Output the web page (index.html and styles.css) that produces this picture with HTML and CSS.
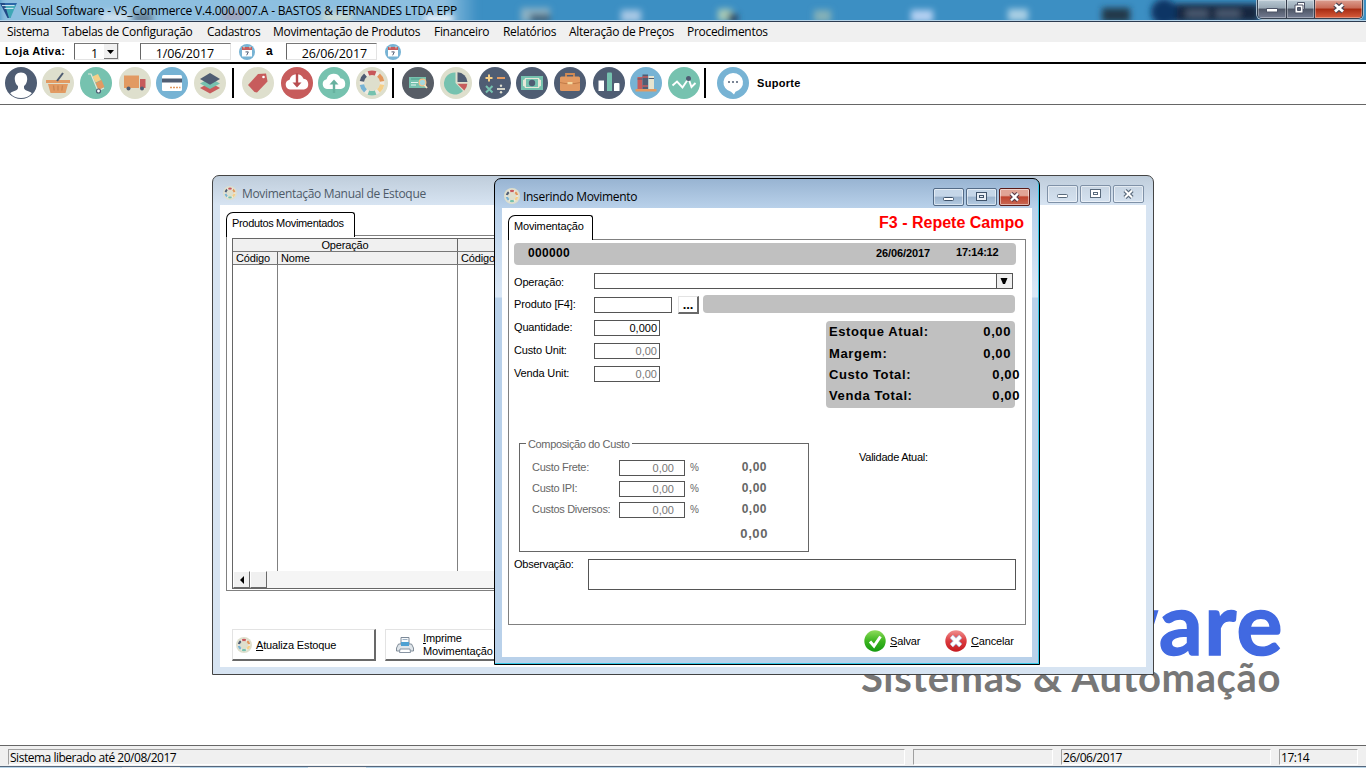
FILE: index.html
```html
<!DOCTYPE html>
<html lang="pt-BR">
<head>
<meta charset="utf-8">
<title>Visual Software - VS_Commerce</title>
<link rel="stylesheet" href="styles.css">
</head>
<body>
<svg class="defs" aria-hidden="true">
  <defs>
    <linearGradient id="okFill" x1="0" y1="0" x2="0" y2="1"><stop offset="0" stop-color="#8fdc5c"/><stop offset=".5" stop-color="#3cb51f"/><stop offset="1" stop-color="#159a10"/></linearGradient>
    <linearGradient id="noFill" x1="0" y1="0" x2="0" y2="1"><stop offset="0" stop-color="#f09090"/><stop offset=".5" stop-color="#db3a3e"/><stop offset="1" stop-color="#c41a20"/></linearGradient>
    <symbol id="ring" viewBox="0 0 32 32">
      <circle cx="16" cy="16" r="16" fill="#dedfcd"/>
      <g fill="none" stroke-width="4.4">
        <circle cx="16" cy="16" r="10.2" stroke="#eeeae0" stroke-width="4.4"/>
        <path d="M12.4 6.4A10.2 10.2 0 0 1 19.6 6.4" stroke="#c7575a"/>
        <path d="M22.500 8.100A10.200 10.200 0 0 1 26.100 14.300" stroke="#e2975d"/>
        <path d="M26.100 17.700A10.200 10.200 0 0 1 22.500 23.900" stroke="#f5cf87"/>
        <path d="M19.600 25.600A10.200 10.200 0 0 1 12.400 25.600" stroke="#76c2af"/>
        <path d="M9.500 23.900A10.200 10.200 0 0 1 5.900 17.700" stroke="#77b3d4"/>
        <path d="M5.900 14.300A10.200 10.200 0 0 1 9.500 8.100" stroke="#4f5d73"/>
      </g>
    </symbol>
    <symbol id="calendar" viewBox="0 0 16 16">
      <circle cx="8" cy="8" r="8" fill="#77b3d4"/>
      <path d="M3 5h10v7.5H3z" fill="#fff"/><path d="M3 3h10v3H3z" fill="#c75c5c"/>
      <path d="M5 2v2.400M11 2v2.400" stroke="#e0e0d1" stroke-width="1"/>
      <path d="M6.500 7.900h2.800L7.700 11.300" fill="none" stroke="#4f5d73" stroke-width="1"/>
    </symbol>
  </defs>
</svg>

<header class="titlebar">
  <svg class="glass" width="1366" height="20" viewBox="0 0 1366 20">
    <filter id="soft" x="-5%" y="-50%" width="110%" height="200%"><feGaussianBlur stdDeviation="3"/></filter>
    <linearGradient id="halo"><stop offset="0" stop-color="#a9cfe9"/><stop offset=".93" stop-color="#a9cfe9"/><stop offset="1" stop-color="#a9cfe9" stop-opacity="0"/></linearGradient>
    <g filter="url(#soft)">
      <path d="M0 -6h478v32H0z" fill="url(#halo)" opacity=".75"/>
      <path d="M100 12h30v12h-30z" fill="#e7eef4" opacity=".7"/>
      <path d="M133 12h20v12h-20z" fill="#4c5362" opacity=".55"/>
      <path d="M222 10h22v12h-22z" fill="#b87888" opacity=".4"/>
      <path d="M322 12h30v12h-30z" fill="#f0efcf" opacity=".6"/><path d="M425 15h28v8h-28z" fill="#edf4fb"/>
      <path d="M521 8h29v14h-29z" fill="#8db2c5"/><path d="M530 14h20v8h-20z" fill="#47657b"/>
      <path d="M621 10h20v12h-20z" fill="#a7c8e5"/>
      <path d="M718 9h14v12h-14z" fill="#a9cbb7"/><path d="M728 14h10v8h-10z" fill="#29435e"/>
      <path d="M814 10h17v12h-17z" fill="#84b1b8"/>
      <path d="M911 10h22v12h-22z" fill="#b4d0f2"/><path d="M1008 9h20v12h-20z" fill="#a9cfe4"/>
      <path d="M1102 8h28v14h-28z" fill="#22374a"/>
      <path d="M1163 4h96v18h-96z" fill="#14253f"/><circle cx="1164" cy="12" r="13" fill="#0b3565"/>
      <path d="M1186 11h22v5h-22zM1216 11h24v5h-24z" fill="#56677f"/>
    </g>
  </svg>
  <svg class="applogo" width="17" height="17" viewBox="0 0 17 17"><path d="M0 1h17l-2 4H2z" fill="#2d66a8"/><path d="M0 1h4.500l6 15H7.500z" fill="#214a86"/><path d="M5 3h11L10.500 16H9z" fill="#3fa7b5"/><path d="M2 3.600h12.500M4.500 6.400h9" stroke="#d5ebf7" stroke-width="1"/></svg>
  <span class="apptitle">Visual Software - VS_Commerce V.4.000.007.A - BASTOS &amp; FERNANDES LTDA EPP</span>
  <div class="sysbtns">
    <span class="sys"><svg width="28" height="18"><path d="M8.500 8.500h11v3.500h-11z" fill="#fff" stroke="#4c5367"/></svg></span>
    <span class="sys"><svg width="27" height="18"><path d="M10.500 2.500h7v7h-7z" fill="#fff" stroke="#4c5367"/><path d="M8 5h8v8H8z" fill="#fff" stroke="#4c5367"/><path d="M10.500 7.500h3v3h-3z" fill="#596172" stroke="#4c5367"/></svg></span>
    <span class="sys close"><svg width="47" height="18"><path d="M20 4.500l8 7M28 4.500l-8 7" stroke="#4c4552" stroke-width="5"/><path d="M20 4.500l8 7M28 4.500l-8 7" stroke="#fff" stroke-width="2.800"/></svg></span>
  </div>
</header>

<nav class="menu">
  <span>Sistema</span><span>Tabelas de Configuração</span><span>Cadastros</span><span>Movimentação de Produtos</span><span>Financeiro</span><span>Relatórios</span><span>Alteração de Preços</span><span>Procedimentos</span>
</nav>

<section class="filters">
  <b class="store">Loja Ativa:</b>
  <span class="sunken shop">1<i class="drop"><svg width="13" height="14"><path d="M3 6h7l-3.500 4z"/></svg></i></span>
  <span class="sunken date first">1/06/2017</span>
  <svg class="cal" width="16" height="16"><use href="#calendar"/></svg>
  <b class="until">a</b>
  <span class="sunken date">26/06/2017</span>
  <svg class="cal" width="16" height="16"><use href="#calendar"/></svg>
</section>

<section class="toolbar">
  <svg viewBox="0 0 32 32"><circle cx="16" cy="16" r="16" fill="#4f5d73"/><path d="M16 5.500c4.500 0 6.500 3 6.200 7-.3 3.200-1.500 5.200-3.200 6.500v2c0 1.500 2 2.500 5 3.500 1.500.5 2.200 1 2.800 1.700C24 29.500 20 31 16 31S8 29.500 5.200 26.200C6 25.500 6.500 25 8 24.500c3-1 5-2 5-3.500v-2c-1.700-1.300-2.900-3.300-3.200-6.500-.3-4 1.700-7 6.200-7z" fill="#fff"/></svg>
  <svg viewBox="0 0 32 32"><circle cx="16" cy="16" r="16" fill="#dedfcd"/><path d="M4 13h24v3H4zM6 17h20l-2.500 9h-15z" fill="#e29a62"/><path d="M11.500 18.500l.7 5M16 18.500v5M20.500 18.500l-.7 5" stroke="#c98450" stroke-width="1.300"/><path d="M21 6l-6 8" stroke="#4f5d73" stroke-width="2"/></svg>
  <svg viewBox="0 0 32 32"><circle cx="16" cy="16" r="16" fill="#76c2af"/><path d="M12.500 9.500l5.500-2.500 3 6-5.500 2.500z" fill="#f5cf87"/><path d="M15.500 16l6-3 3 7-6 3z" fill="#e29a62"/><path d="M8 7h3l7 17 6-3" fill="none" stroke="#e6e7d8" stroke-width="1.200"/><circle cx="18.500" cy="24" r="2" fill="#fff" stroke="#4f5d73" stroke-width="1.200"/></svg>
  <svg viewBox="0 0 32 32"><circle cx="16" cy="16" r="16" fill="#dedfcd"/><path d="M5 8.500h15v12.500H5z" fill="#e29a62"/><path d="M21 12h5.500v9H21z" fill="#c75c5c"/><circle cx="9.500" cy="21.500" r="2" fill="#4f5d73"/><circle cx="23" cy="21.500" r="2" fill="#4f5d73"/></svg>
  <svg viewBox="0 0 32 32"><circle cx="16" cy="16" r="16" fill="#77b3d4"/><rect x="6" y="8" width="20" height="16" rx="1.500" fill="#fff"/><path d="M6 11.500h20v4H6z" fill="#4f5d73"/><path d="M14 20.500h2M17 20.500h2M20 20.500h2M23 20.500h1.500" stroke="#e29a62" stroke-width="1.500"/></svg>
  <svg viewBox="0 0 32 32"><circle cx="16" cy="16" r="16" fill="#dedfcd"/><path d="M6 21l10 5.500L26 21l-10-5.500z" fill="#c75c5c"/><path d="M6 16.500L16 22l10-5.500L16 11z" fill="#76c2af"/><path d="M6 12l10 5.800L26 12 16 6z" fill="#4f5d73"/></svg>
  <i class="sep"></i>
  <svg viewBox="0 0 32 32"><circle cx="16" cy="16" r="16" fill="#dedfcd"/><path d="M6 18L16 7l8-.5 1.500 8L15 25.500 12.500 25z" fill="#c75c5c"/><circle cx="21.500" cy="10" r="1.300" fill="#fff"/></svg>
  <svg viewBox="0 0 32 32"><circle cx="16" cy="16" r="16" fill="#c75c5c"/><path d="M9 22.500a5 5 0 0 1-.5-9.800 7.500 7.500 0 0 1 14-1A5.500 5.500 0 0 1 23 22.500z" fill="#fff"/><path d="M16 6v11" stroke="#b84d50" stroke-width="2.400"/><path d="M11.500 15.500h9L16 20.500z" fill="#b84d50"/></svg>
  <svg viewBox="0 0 32 32"><circle cx="16" cy="16" r="16" fill="#76c2af"/><path d="M9 22a5 5 0 0 1-.5-9.800 7.500 7.500 0 0 1 14-1A5.500 5.500 0 0 1 23 22z" fill="#fff"/><path d="M16 16v10" stroke="#67b19f" stroke-width="2.400"/><path d="M11.500 17.500h9L16 12.500z" fill="#67b19f"/></svg>
  <svg><use href="#ring"/></svg>
  <i class="sep"></i>
  <svg viewBox="0 0 32 32"><circle cx="16" cy="16" r="16" fill="#575d66"/><path d="M7 10h17v11H7z" fill="#76c2af"/><path d="M9 12h12" stroke="#4f9a8a" stroke-width="1"/><path d="M9 15.500h7M9 18h5" stroke="#e5f4ef" stroke-width="1"/><circle cx="20.500" cy="15.500" r="3.300" fill="#a6d8dd" stroke="#f3c08b" stroke-width="1.300"/><path d="M22.500 18l2.500 3" stroke="#f3e3c5" stroke-width="1.800"/></svg>
  <svg viewBox="0 0 32 32"><circle cx="16" cy="16" r="16" fill="#dedfcd"/><path d="M15.500 5.500V16l7.500 8A11 11 0 1 1 15.500 5.500z" fill="#76c2af"/><path d="M17.500 5.200A10.500 10.500 0 0 1 27.500 15h-10z" fill="#4f5d73"/><path d="M17.500 16.800h9.800a10 10 0 0 1-3 6.700z" fill="#c75c5c"/></svg>
  <svg viewBox="0 0 32 32"><circle cx="16" cy="16" r="16" fill="#4f5d73"/><path d="M6.500 11h7M10 7.500v7" stroke="#f5cf87" stroke-width="2"/><path d="M18 11h8" stroke="#e29a62" stroke-width="2"/><path d="M7 19l6.500 6.500M13.500 19L7 25.500" stroke="#76c2af" stroke-width="2"/><path d="M18 22h8" stroke="#e0e0d1" stroke-width="1.800"/><circle cx="22" cy="18.800" r="1.200" fill="#e0e0d1"/><circle cx="22" cy="25.200" r="1.200" fill="#e0e0d1"/></svg>
  <svg viewBox="0 0 32 32"><circle cx="16" cy="16" r="16" fill="#4f5d73"/><path d="M5 9h22v14H5z" fill="#76c2af"/><path d="M9 11h14q0 2 2 2v6q-2 0-2 2H9q0-2-2-2v-6q2 0 2-2z" fill="#e6e7d8"/><path d="M10 12h12v8H10z" fill="#76c2af"/><circle cx="16" cy="16" r="3.200" fill="#4f5d73"/></svg>
  <svg viewBox="0 0 32 32"><circle cx="16" cy="16" r="16" fill="#4f5d73"/><path d="M12 10V7h8v3" fill="none" stroke="#d18a53" stroke-width="1.800"/><rect x="6" y="9.500" width="20" height="14.500" rx="1.500" fill="#e29a62"/><path d="M6 15.500q10 2.500 20 0" fill="none" stroke="#c47d4a" stroke-width="1.200"/><path d="M13.500 15h5v2.300h-5z" fill="#f5d9a0"/></svg>
  <svg viewBox="0 0 32 32"><circle cx="16" cy="16" r="16" fill="#4f5d73"/><path d="M5.500 13.500h5.500V24H5.500z" fill="#fff"/><path d="M14 6.500q0-1 1-1h3q1 0 1 1V24h-5z" fill="#76c2af"/><path d="M21 17q0-1 1-1h3.500q1 0 1 1v7H21z" fill="#fff"/></svg>
  <svg viewBox="0 0 32 32"><circle cx="16" cy="16" r="16" fill="#77b3d4"/><path d="M7.500 10h5v12.500h-5z" fill="#c75c5c"/><path d="M12.500 7.500H18v15h-5.500z" fill="#4f5d73"/><path d="M12.500 10H18M12.500 19H18" stroke="#c75c5c" stroke-width="1.500"/><path d="M18.500 9h5.500v13.500h-5.500z" fill="#e6e4cf"/><path d="M7.500 12h5M18.500 11.500H24" stroke="#4f5d73" stroke-width="1"/><path d="M5.500 22h21v2.500h-21z" fill="#e29a62"/></svg>
  <svg viewBox="0 0 32 32"><circle cx="16" cy="16" r="16" fill="#76c2af"/><path d="M4.500 18.500l4.500-4 5.500 6 6-9 3 8.500 4-4" fill="none" stroke="#fff" stroke-width="1.900"/><circle cx="20.500" cy="11.500" r="2.500" fill="#4f5d73"/></svg>
  <i class="sep"></i>
  <svg viewBox="0 0 32 32"><circle cx="16" cy="16" r="16" fill="#77b3d4"/><path d="M16 6a10 9.500 0 0 1 2.500 18.700L17 27.500l-3-2.800A10 9.500 0 0 1 16 6z" fill="#fff"/><path d="M11 15h2M15 15h2M19 15h2" stroke="#4f5d73" stroke-width="1.600"/></svg>
  <b class="support">Suporte</b>
</section>

<main class="desktop">
  <div class="brand"><div class="brand-name">Software</div><div class="brand-sub">Sistemas &amp; Automação</div></div>

  <section class="win back">
    <header class="wintitle"><svg width="14" height="14"><use href="#ring"/></svg><span>Movimentação Manual de Estoque</span>
      <div class="winbtns"><i><svg width="29" height="16"><rect x="9.500" y="8.500" width="10" height="3" rx="1" fill="#fff" stroke="#596a7c"/></svg></i><i><svg width="29" height="16"><rect x="9.500" y="3.500" width="10" height="8" fill="#fff" stroke="#596a7c"/><rect x="12.500" y="6.500" width="4" height="2" fill="none" stroke="#596a7c"/></svg></i><i><svg width="29" height="16"><path d="M11 4.500l7 7M18 4.500l-7 7" stroke="#596a7c" stroke-width="4.500"/><path d="M11 4.500l7 7M18 4.500l-7 7" stroke="#fff" stroke-width="2"/></svg></i></div>
    </header>
    <div class="winbody">
      <div class="tab tab-back">Produtos Movimentados</div>
      <div class="listpanel">
        <div class="grid">
          <div class="gh top"><span>Operação</span><span></span></div>
          <div class="gh cols"><span>Código</span><span>Nome</span><span>Código</span></div>
          <div class="rows"><span></span><span></span><span></span></div>
          <div class="scroll"><i><svg width="17" height="16"><path d="M10 4v8L6 8z"/></svg></i><i></i></div>
        </div>
      </div>
      <div class="actions">
        <div class="btn"><svg width="16" height="16"><use href="#ring"/></svg><span><u>A</u>tualiza Estoque</span></div>
        <div class="btn print"><svg width="18" height="18" viewBox="0 0 18 18"><path d="M5 1.500h8V8H5z" fill="#f7fafc" stroke="#7c8998"/><path d="M6.500 3.500h5" stroke="#9cb1c4"/><path d="M2.500 8h13l2 4v3H.5v-3z" fill="#dfe5ea" stroke="#75818f" stroke-width=".9"/><path d="M5 6h8v4H5z" fill="#4da0d2"/><path d="M4 13h10l.5 3.500h-11z" fill="#fff" stroke="#7c8998" stroke-width=".9"/></svg><span><u>I</u>mprime<br>Movimentação</span></div>
      </div>
    </div>
  </section>

  <section class="win front">
    <header class="wintitle"><svg width="16" height="16"><use href="#ring"/></svg><span>Inserindo Movimento</span>
      <div class="winbtns"><i><svg width="29" height="16"><rect x="9.500" y="8.500" width="10" height="3" rx="1" fill="#fff" stroke="#3f536b"/></svg></i><i><svg width="29" height="16"><rect x="9.500" y="3.500" width="10" height="8" fill="#e8eef5" stroke="#3f536b"/><rect x="12.500" y="6.500" width="4" height="2" fill="none" stroke="#3f536b"/></svg></i><i class="red"><svg width="29" height="16"><path d="M11 4.500l7 7M18 4.500l-7 7" stroke="#5a3b47" stroke-width="4.500"/><path d="M11 4.500l7 7M18 4.500l-7 7" stroke="#fff" stroke-width="2.300"/></svg></i></div>
    </header>
    <div class="winbody">
      <div class="dlghead"><div class="tab tab-front">Movimentação</div><div class="hint">F3 - Repete Campo</div></div>
      <div class="panel">
        <div class="infobar"><b class="code">000000</b><b class="day">26/06/2017</b><b class="hour">17:14:12</b></div>
        <div class="row op"><label>Operação:</label><span class="box combo"><i><svg width="14" height="14"><path d="M3.500 4h7L8 10H6z"/></svg></i></span></div>
        <div class="row prod"><label>Produto [F4]:</label><span class="box p"></span><span class="dots">...</span><span class="fill"></span></div>
        <div class="middle">
          <div class="fields">
            <div class="row"><label>Quantidade:</label><span class="box n on">0,000</span></div>
            <div class="row"><label>Custo Unit:</label><span class="box n">0,00</span></div>
            <div class="row"><label>Venda Unit:</label><span class="box n">0,00</span></div>
          </div>
          <div class="totals">
            <div><span>Estoque Atual:</span><span>0,00</span></div>
            <div><span>Margem:</span><span>0,00</span></div>
            <div class="over"><span>Custo Total:</span><span>0,00</span></div>
            <div class="over"><span>Venda Total:</span><span>0,00</span></div>
          </div>
        </div>
        <div class="lower">
          <div class="group">
            <div class="legend"><span>Composição do Custo</span></div>
            <div class="crow"><label>Custo Frete:</label><span class="box c">0,00</span><em>%</em><b>0,00</b></div>
            <div class="crow"><label>Custo IPI:</label><span class="box c">0,00</span><em>%</em><b>0,00</b></div>
            <div class="crow"><label>Custos Diversos:</label><span class="box c">0,00</span><em>%</em><b>0,00</b></div>
            <div class="csum">0,00</div>
          </div>
          <div class="valid">Validade Atual:</div>
        </div>
        <div class="obs"><label>Observação:</label><span class="box memo"></span></div>
      </div>
      <footer class="dlgfoot">
        <svg width="22" height="22"><circle cx="11" cy="11" r="10.700" fill="url(#okFill)"/><path d="M6 11.500l4 4.500 6.500-9.500" fill="none" stroke="#fff" stroke-width="3"/></svg><span class="save"><u>S</u>alvar</span>
        <svg width="22" height="22"><circle cx="11" cy="11" r="10.700" fill="url(#noFill)"/><path d="M6.500 6.500l9 9M15.500 6.500l-9 9" stroke="#a8b4d8" stroke-width="4.600"/><path d="M6.500 6.500l9 9M15.500 6.500l-9 9" stroke="#fff" stroke-width="3.200"/></svg><span class="cancel"><u>C</u>ancelar</span>
      </footer>
    </div>
  </section>
</main>

<footer class="status"><span>Sistema liberado até 20/08/2017</span><span></span><span>26/06/2017</span><span>17:14</span></footer>
<div class="taskbar"></div>
</body>
</html>
```
FILE: styles.css
```css
* { box-sizing: border-box; }
body { margin: 0; width: 1366px; height: 768px; overflow: hidden; background: #fff; color: #000; font-family: "Liberation Sans", sans-serif; font-size: 11px; letter-spacing: -0.15px; white-space: nowrap; display: flex; flex-direction: column; }
i, em { font-style: normal; }
svg { display: block; flex: none; }
.defs { position: absolute; width: 0; height: 0; }

/* application title bar */
.titlebar { position: relative; height: 22px; flex: none; display: flex; background: #3c8fc3; border-bottom: 1px solid #2c3b50; box-shadow: inset 0 -1px #b5d3e8; overflow: hidden; font-family: "Open Sans", sans-serif; }
.glass { position: absolute; left: 0; top: 0; }
.applogo { position: relative; margin: 2px 0 0 0; }
.apptitle { position: relative; margin-left: 4px; font-size: 12px; line-height: 21px; letter-spacing: -0.17px; }
.sysbtns { position: relative; margin-left: auto; margin-right: 3px; display: flex; height: 19px; border: 1px solid #344050; border-top: 0; border-radius: 0 0 5px 5px; box-shadow: 0 0 0 1px #a9bdcd; overflow: hidden; }
.sys { display: block; background: linear-gradient(#b9c9d4, #98a7b4 45%, #4d5565 50%, #747c92); border-right: 1px solid #343c4b; box-shadow: inset 0 0 0 1px #ffffff55; }
.sys.close { background: linear-gradient(#dc9f91, #c86a56 45%, #a72b12 50%, #d85d3c); border-right: 0; }

.menu { height: 20px; flex: none; background: #f0f0f0; padding-left: 7px; display: grid; grid-template-columns: 55px 145px 66px 161px 69px 66px 118px 90px; font: 12px/20px "Open Sans", sans-serif; letter-spacing: -0.3px; }

/* store and period filters */
.filters { height: 22px; flex: none; border-bottom: 2px solid #000; display: flex; }
.store { width: 69px; padding-left: 5px; line-height: 18px; letter-spacing: 0.4px; }
.sunken { height: 17px; margin-top: 1px; border: 1px solid #e3e3e3; border-left: 1px solid #666; border-top: 1px solid #777; font: 12.5px/19px "Open Sans", sans-serif; letter-spacing: -0.1px; text-align: right; }
.shop { width: 45px; margin-left: 5px; display: flex; justify-content: flex-end; }
.drop { width: 14px; height: 15px; margin-left: 6px; background: #f0f0f0; border: 1px solid #777; border-width: 0 1px 1px 0; }
.date { width: 91px; padding-right: 9px; }
.date.first { margin-left: 21px; padding-right: 16px; }
.cal { margin: 2px 0 0 8px; }
.until { width: 31px; padding-left: 11px; line-height: 18px; font-size: 12px; }

.toolbar { height: 41px; flex: none; border-bottom: 1px solid #666; padding: 3px 0 0 5px; display: grid; grid-template-columns: 37px 38px 39px 37px 38px 38px 10px 39px 37px 38px 36px 10px 38px 39px 37px 38px 39px 37px 38px 36px 13px 40px 60px; }
.toolbar svg { width: 32px; height: 32px; }
.sep { width: 2px; height: 30px; margin-top: 1px; background: #000; }
.support { line-height: 32px; letter-spacing: 0.3px; }

.desktop { position: relative; height: 640px; flex: none; }
.brand { position: absolute; right: 82px; top: 474px; text-align: right; font-family: Lato, sans-serif; font-weight: bold; }
.brand-name { font-size: 86px; line-height: 86px; letter-spacing: 1.5px; color: #4169e1; -webkit-text-stroke: 1.5px #4169e1; }
.brand-sub { font-size: 40px; line-height: 44px; letter-spacing: 0.6px; margin: -10px 3px 0 0; color: #777; }

/* child windows */
.win { position: absolute; border: 1px solid #444; border-radius: 7px 7px 0 0; display: flex; flex-direction: column; }
.wintitle { display: flex; font: 12px/18px "Open Sans", sans-serif; }
.winbody { flex: 1; background: #fff; }
.winbtns { display: flex; margin-left: auto; }
.winbtns i { height: 18px; border: 1px solid #7f91a7; border-radius: 2px; box-shadow: inset 0 0 0 1px #ffffff80; }
.back { left: 212px; top: 70px; width: 942px; height: 500px; padding: 0 7px 7px; background: linear-gradient(#bfcddb, #d7e4f2 29px); }
.back .wintitle { height: 29px; padding: 9px 2px 0 3px; color: #4e5a68; }
.back .wintitle span { margin-left: 5px; letter-spacing: -0.32px; }
.back .winbtns { gap: 2px; }
.back svg[height="14"] { margin-top: 1px; }
.front { left: 494px; top: 73px; width: 546px; height: 487px; padding: 0 7px 7px; border-color: #000; background: linear-gradient(#98b4d2, #b9d1ea 29px, #dbe8f6 118px, #b9d1ea 119px); box-shadow: inset -1px -1px #35c9e8; }
.front .wintitle { height: 29px; padding: 9px 2px 0 2px; }
.front .wintitle span { margin-left: 3px; letter-spacing: -0.3px; }
.front .winbtns { gap: 2px; }
.front .winbtns i { background: linear-gradient(#c5d6e8 45%, #9bb3cd 50%, #b4cbe2); border-color: #536b87; }
.front .winbtns .red { background: linear-gradient(#e1a596 40%, #c0452f 50%, #c96954); border-color: #5b1b18; }

.tab { position: relative; border: 1px solid #000; border-bottom: 0; border-radius: 7px 3px 0 0; background: #fff; }
.tab-back { width: 129px; height: 25px; margin: 7px 0 0 6px; padding-left: 5px; line-height: 20px; letter-spacing: -0.33px; z-index: 1; }
.listpanel { width: 790px; height: 356px; margin: -1px 0 0 6px; border: 1px solid #808080; border-top-color: #808080; padding: 2px 0 0 5px; margin-top: -2px; }
.grid { height: 351px; border: 1px solid #666; display: flex; flex-direction: column; }
.gh { display: grid; background: #f0f0f0; height: 13px; line-height: 13px; border-bottom: 1px solid #777; overflow: hidden; }
.gh span { border-right: 1px solid #666; padding-left: 3px; }
.top { grid-template-columns: 225px 1fr; text-align: center; }
.top span { padding-left: 0; }
.cols { grid-template-columns: 45px 180px 1fr; }
.rows { flex: 1; display: grid; grid-template-columns: 45px 180px 1fr; }
.rows span { border-right: 1px solid #808080; }
.scroll { display: flex; height: 17px; background: #f5f5f5; }
.scroll i { width: 17px; height: 17px; background: #f0f0f0; border: 1px solid #696969; border-left-color: #fff; border-top-color: #fff; }
.actions { display: flex; gap: 9px; margin: 38px 0 0 12px; }
.btn { width: 144px; height: 32px; border: 1px solid #e3e3e3; border-right: 2px solid #696969; border-bottom: 2px solid #696969; display: flex; align-items: center; padding-left: 3px; gap: 4px; }
.print { padding-left: 10px; gap: 9px; line-height: 13px; }

/* movement entry dialog */
.dlghead { display: flex; justify-content: space-between; height: 31px; padding: 7px 8px 0 6px; }
.tab-front { width: 85px; height: 25px; padding-left: 5px; line-height: 21px; z-index: 1; }
.hint { color: #f00; font-weight: bold; font-size: 16px; line-height: 16px; letter-spacing: 0; }
.panel { margin: 0 6px; height: 386px; border: 1px solid #808080; padding: 3px 9px 0 5px; }
.infobar { height: 22px; border-radius: 4px; background: #c0c0c0; display: flex; line-height: 20px; }
.code { width: 362px; padding-left: 14px; font-size: 12px; line-height: 21px; letter-spacing: 0.35px; }
.day { width: 80px; letter-spacing: -0.1px; }
.hour { line-height: 18px; letter-spacing: -0.2px; }
.row { display: flex; height: 16px; align-items: center; }
label { width: 80px; flex: none; line-height: 16px; }
.row label { margin-top: -2px; }
.row.op label { margin-top: 1px; }
.box { display: block; height: 16px; border: 1px solid #555; background: #fff; line-height: 15px; text-align: right; color: #777; }
.op { margin-top: 8px; }
.combo { width: 419px; display: flex; justify-content: flex-end; }
.combo i { width: 16px; border-left: 1px solid #555; background: #f0f0f0; }
.prod { height: 20px; margin-top: 6px; }
.p { width: 78px; }
.dots { width: 21px; height: 18px; margin-left: 6px; border: 1px solid #e3e3e3; border-right: 2px solid #696969; border-bottom: 2px solid #696969; font-weight: bold; font-size: 13px; line-height: 15px; text-align: center; }
.fill { align-self: flex-start; width: 312px; height: 18px; margin-left: 4px; border-radius: 4px; background: #c0c0c0; }
.middle { display: flex; justify-content: space-between; padding-right: 1px; height: 93px; }
.fields { display: flex; flex-direction: column; gap: 7px; padding-top: 5px; }
.n { width: 66px; padding-right: 2px; letter-spacing: 0; }
.n.on { color: #000; }
.totals { width: 189px; height: 87px; margin-top: 6px; border-radius: 4px; background: #c0c0c0; padding-left: 3px; font-weight: bold; font-size: 13px; letter-spacing: 0.6px; line-height: 21px; }
.totals div { display: flex; justify-content: space-between; padding-right: 4px; }
.totals div:first-child { height: 22px; }
.totals .over { margin-right: -5px; padding-right: 0; }
.lower { display: flex; margin-top: 35px; height: 109px; }
.group { margin-left: 5px; width: 290px; border: 1px solid #666; color: #666; }
.legend { height: 16px; margin-top: -8px; padding-left: 6px; line-height: 16px; letter-spacing: -0.35px; }
.legend span { background: #fff; padding: 0 2px; }
.crow { display: flex; height: 16px; margin: 0 0 5px 12px; line-height: 15px; }
.legend + .crow { margin-top: 8px; }
.crow label { width: 87px; line-height: 14px; letter-spacing: -0.3px; }
.c { width: 66px; padding-right: 10px; letter-spacing: 0; }
.crow em { width: 34px; padding-left: 5px; font-size: 10px; }
.crow b { width: 48px; text-align: right; font-size: 12px; letter-spacing: 0.5px; }
.csum { width: 248px; text-align: right; font-weight: bold; font-size: 13px; letter-spacing: 0.6px; line-height: 21px; }
.valid { margin: 6px 0 0 50px; line-height: 16px; letter-spacing: -0.25px; }
.obs { display: flex; margin-top: 7px; }
.obs label { width: 74px; line-height: 11px; letter-spacing: -0.25px; }
.memo { width: 428px; height: 31px; }
.dlgfoot { display: flex; align-items: center; height: 32px; padding-left: 362px; }
.save { width: 59px; padding-left: 4px; }
.cancel { padding-left: 4px; }

.status { height: 21px; flex: none; border-top: 1px solid #666; background: #f0f0f0; display: grid; grid-template-columns: 897px 140px 210px 79px; gap: 8px; padding: 3px 0 0 8px; font: 12px/15px "Open Sans", sans-serif; letter-spacing: -0.48px; }
.status span { height: 16px; border: 1px solid #fff; border-left-color: #a0a0a0; border-top-color: #a0a0a0; padding-left: 1px; }
.taskbar { height: 2px; flex: none; border-top: 1px solid #55677d; background: linear-gradient(90deg, #b8d4e8 122px, #eee 122px 180px, #b8d4e8 180px 308px, #eee 308px 366px, #b8d4e8 366px); }
```
